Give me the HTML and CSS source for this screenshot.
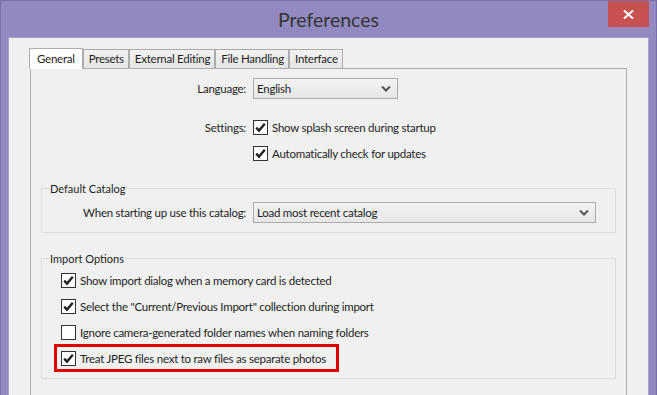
FILE: index.html
```html
<html>
<head>
    <link rel="stylesheet" href="styles.css">
</head>
<body>
<div class='window'>
    <div class='titlebar'>
        <div class='title'>Preferences</div>
        <button class='close' aria-label='Close'>
            <svg width="11" height="9" viewBox="0 0 11 9"><path d="M1 0.5 L10 8.5 M10 0.5 L1 8.5" stroke="#fff" stroke-width="2"/></svg>
        </button>
    </div>
    <div class='client'>
        <div class='tabs'>
            <div class='tab selected'>General</div>
            <div class='tab'>Presets</div>
            <div class='tab'>External Editing</div>
            <div class='tab'>File Handling</div>
            <div class='tab'>Interface</div>
        </div>
        <div class='panel'>
            <div class='form'>
                <div class='label'>Language:</div>
                <div class='select lang'><span>English</span><svg class='chev' width="10" height="6" viewBox="0 0 10 6"><path d="M1 0.5 L5 4.5 L9 0.5" fill="none" stroke="#555" stroke-width="2"/></svg></div>

                <div class='label settings'>Settings:</div>
                <label class='check settings'><span class='box on'></span>Show splash screen during startup</label>

                <div></div>
                <label class='check second'><span class='box on'></span>Automatically check for updates</label>
            </div>

            <fieldset class='group catalog'>
                <legend>Default Catalog</legend>
                <div class='form narrow'>
                    <div class='label'>When starting up use this catalog:</div>
                    <div class='select'><span>Load most recent catalog</span><svg class='chev' width="10" height="6" viewBox="0 0 10 6"><path d="M1 0.5 L5 4.5 L9 0.5" fill="none" stroke="#555" stroke-width="2"/></svg></div>
                </div>
            </fieldset>

            <fieldset class='group import'>
                <legend>Import Options</legend>
                <div class='checks'>
                    <label class='check'><span class='box on'></span>Show import dialog when a memory card is detected</label>
                    <label class='check'><span class='box on'></span>Select the "Current/Previous Import" collection during import</label>
                    <label class='check'><span class='box'></span>Ignore camera-generated folder names when naming folders</label>
                    <label class='check marked'><span class='box on'></span>Treat JPEG files next to raw files as separate photos</label>
                </div>
            </fieldset>
        </div>
    </div>
</div>
</body>
</html>
```
FILE: styles.css
```css
body {
    margin: 0;
    width: 657px;
    height: 395px;
    overflow: hidden;
    background: #9189c0;
    font-family: Lato, "Noto Sans", sans-serif;
    font-size: 11.5px;
    letter-spacing: -0.25px;
    color: #1e1e1e;
}

.window {
    display: flex;
    flex-direction: column;
    height: 100%;
    box-sizing: border-box;
    border: 1px solid #7870a8;
    border-bottom: none;
}

.titlebar {
    flex-shrink: 0;
    display: grid;
    grid-template-columns: 1fr auto 1fr;
    height: 36px;
}

.title {
    grid-column: 2;
    font-size: 19.5px;
    letter-spacing: 0;
    color: #353535;
    padding-top: 7px;
}

.close {
    grid-column: 3;
    justify-self: end;
    width: 41px;
    height: 26px;
    margin-right: 7px;
    border: none;
    padding: 0;
    background: #c75050;
    display: flex;
    align-items: center;
    justify-content: center;
}

.client {
    flex: 1;
    display: flex;
    flex-direction: column;
    margin: 0 7px;
    background: #f0f0f0;
    border: 1px solid #a7a1cb;
    border-bottom: none;
    padding: 10px 21px 0 21px;
}

.tabs {
    display: flex;
    align-items: flex-end;
    margin-left: -1px;
    margin-bottom: -1px;
    position: relative;
    z-index: 1;
}

.tab {
    height: 18px;
    line-height: 18px;
    padding: 0 4px 0 5px;
    border: 1px solid #acacac;
    background: linear-gradient(#f2f2f2, #e6e6e6);
}

.tab.selected {
    height: 20px;
    line-height: 20px;
    padding: 0 7px;
    background: #fff;
    border-bottom: none;
}

.panel {
    flex: 1;
    border: 1px solid #adadad;
    border-bottom: none;
}

.form {
    display: grid;
    grid-template-columns: 215px 1fr;
    column-gap: 7px;
    align-items: center;
    padding-top: 9px;
}

.label {
    text-align: right;
}

.select {
    display: flex;
    align-items: center;
    justify-content: space-between;
    height: 19px;
    border: 1px solid #acacac;
    background: linear-gradient(#f3f3f3, #e6e6e6);
    padding: 0 6px 0 3px;
}

.select.lang {
    width: 134px;
}

.label.settings,
.check.settings {
    margin-top: 21px;
}

.check.second {
    margin-top: 11px;
}

.check {
    display: flex;
    align-items: center;
    gap: 4px;
    height: 15px;
}

.box {
    width: 13px;
    height: 13px;
    border: 1px solid #333;
    background: #fff;
}

.box.on {
    background: #fff url("data:image/svg+xml;utf8,<svg xmlns='http://www.w3.org/2000/svg' width='13' height='13'><path d='M2.2 6.6 L5 9.6 L10.8 2.8' fill='none' stroke='%23222' stroke-width='2.4'/></svg>") no-repeat;
}

.group {
    margin: 0 10px;
    border: 1px solid #dcdcdc;
    padding: 0 19px 0 0;
}

.group legend {
    font-size: 11px;
    letter-spacing: 0;
    margin-left: 7px;
    padding: 0 1px;
}

.catalog {
    margin-top: 21px;
    padding-bottom: 9px;
}

.catalog .form {
    grid-template-columns: 204px 1fr;
    padding-top: 7px;
}

.import {
    margin-top: 19px;
    padding-left: 19px;
    padding-bottom: 12px;
}

.import legend {
    margin-left: -12px;
}

.checks {
    display: flex;
    flex-direction: column;
    gap: 11px;
    padding-top: 8px;
}

.check.marked {
    align-self: flex-start;
    border: 3px solid #e00000;
    padding: 4px 10px 3px 4px;
    margin: -7px 0 -6px -7px;
}
```
